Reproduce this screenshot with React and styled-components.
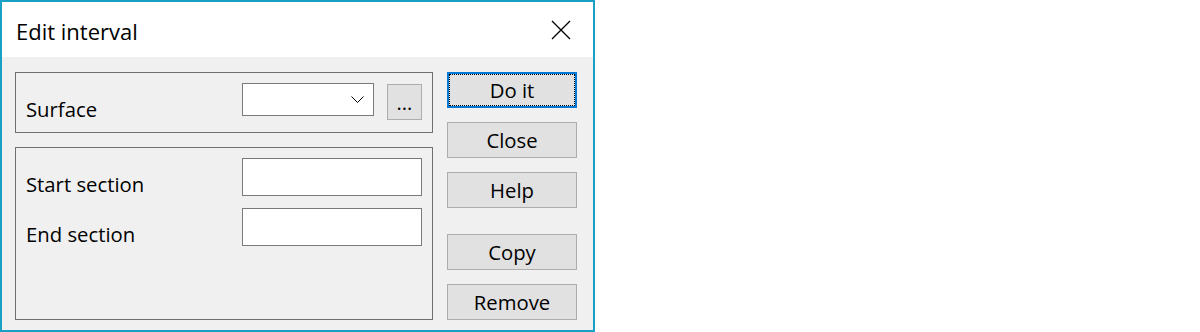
import React from "react";
import styled, { createGlobalStyle } from "styled-components";

const Global = createGlobalStyle`
  html, body { margin: 0; padding: 0; background: #ffffff; }
  body { font-family: "Open Sans", "Noto Sans", sans-serif; }
  * { box-sizing: border-box; }
`;

const Window = styled.div`
  width: 595px;
  height: 332px;
  border: 2px solid #19a0c4;
  display: flex;
  flex-direction: column;
  background: #f0f0f0;
`;

const TitleBar = styled.div`
  height: 55px;
  background: #ffffff;
  display: flex;
  align-items: center;
  justify-content: space-between;
  padding: 0 22px 0 14px;
`;

const Title = styled.div`
  font-size: 22px;
  line-height: 26px;
  color: #000;
  margin-top: 2px;
`;

const CloseIcon = styled.svg`
  width: 20px;
  height: 20px;
  display: block;
`;

const Body = styled.div`
  flex: 1;
  display: flex;
  gap: 14px;
  padding: 15px 16px 10px 13px;
`;

const LeftCol = styled.div`
  width: 418px;
  display: flex;
  flex-direction: column;
  gap: 14px;
`;

const Group = styled.div`
  border: 1px solid #6f6f6f;
  height: ${(p) => p.$h}px;
  padding: 10px 0 0 10px;
  display: flex;
  flex-direction: column;
  gap: 12px;
`;

const Row = styled.div`
  display: flex;
  align-items: flex-start;
`;

const Label = styled.div`
  width: 216px;
  margin-top: 14px;
  font-size: 20.3px;
  line-height: 24px;
  color: #000;
`;

const Combo = styled.div`
  width: 132px;
  height: 33px;
  border: 1px solid #7a7a7a;
  background: #fff;
  position: relative;
`;

const Chevron = styled.svg`
  position: absolute;
  left: 108px;
  top: 12px;
  width: 13px;
  height: 8px;
`;

const DotsButton = styled.div`
  width: 35px;
  height: 36px;
  margin: 1px 0 0 13px;
  border: 1px solid #adadad;
  background: #e1e1e1;
  display: flex;
  align-items: center;
  justify-content: center;
  font-size: 20px;
  line-height: 24px;
  padding-top: 2px;
  color: #000;
`;

const TextInput = styled.div`
  width: 180px;
  height: 38px;
  border: 1px solid #7a7a7a;
  background: #fff;
`;

const RightCol = styled.div`
  width: 130px;
  display: flex;
  flex-direction: column;
`;

const Button = styled.div`
  height: 36px;
  margin-top: ${(p) => p.$gap || 0}px;
  background: #e1e1e1;
  border: ${(p) => (p.$default ? "2px solid #0078d7" : "1px solid #adadad")};
  display: flex;
  align-items: center;
  justify-content: center;
  font-size: 20.3px;
  line-height: 24px;
  color: #000;
  position: relative;
  &::after {
    content: "";
    display: ${(p) => (p.$default ? "block" : "none")};
    position: absolute;
    inset: 0;
    border: 1px dotted #000;
  }
`;

export default function App() {
  return (
    <>
      <Global />
      <Window>
        <TitleBar>
          <Title>Edit interval</Title>
          <CloseIcon viewBox="0 0 20 20">
            <path d="M1 1 L19 19 M19 1 L1 19" stroke="#000" strokeWidth="1.3" fill="none" />
          </CloseIcon>
        </TitleBar>
        <Body>
          <LeftCol>
            <Group $h={61}>
              <Row>
                <Label>Surface</Label>
                <Combo>
                  <Chevron viewBox="0 0 13 8">
                    <polyline points="0.5,0.5 6.5,6.5 12.5,0.5" stroke="#000" strokeWidth="1" fill="none" />
                  </Chevron>
                </Combo>
                <DotsButton>...</DotsButton>
              </Row>
            </Group>
            <Group $h={173}>
              <Row>
                <Label>Start section</Label>
                <TextInput />
              </Row>
              <Row>
                <Label>End section</Label>
                <TextInput />
              </Row>
            </Group>
          </LeftCol>
          <RightCol>
            <Button $default>Do it</Button>
            <Button $gap={14}>Close</Button>
            <Button $gap={14}>Help</Button>
            <Button $gap={26}>Copy</Button>
            <Button $gap={14}>Remove</Button>
          </RightCol>
        </Body>
      </Window>
    </>
  );
}
